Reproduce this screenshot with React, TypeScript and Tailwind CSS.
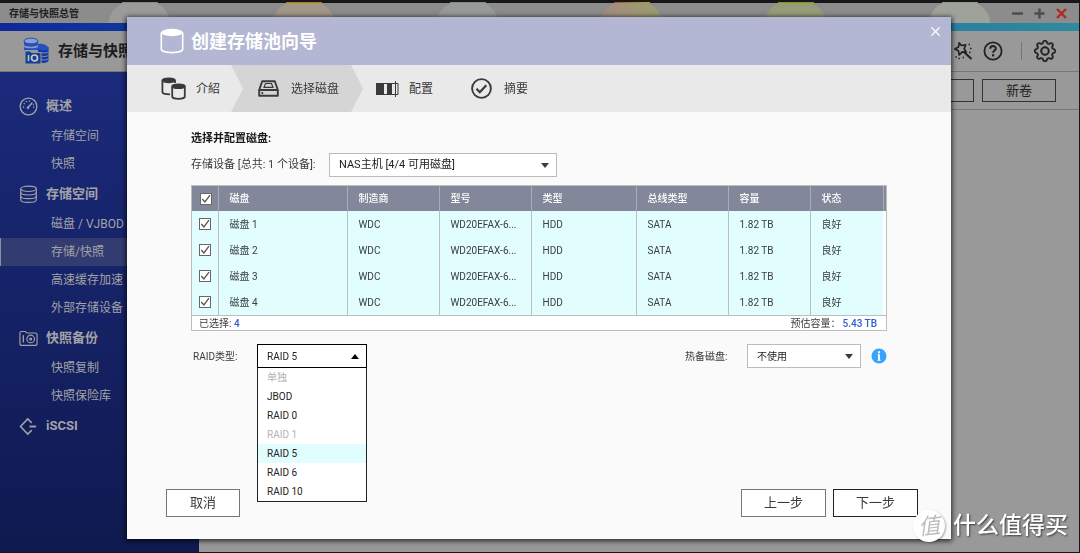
import { useState, type ReactNode } from "react";
import clsx from "clsx";
import { X } from "lucide-react";
import { BsGear } from "react-icons/bs";

const menu = [
  { title: "概述", icon: <GaugeIcon />, items: ["存储空间", "快照"] },
  {
    title: "存储空间",
    icon: <DisksIcon />,
    items: ["磁盘 / VJBOD", "存储/快照", "高速缓存加速", "外部存储设备"],
  },
  { title: "快照备份", icon: <CameraIcon />, items: ["快照复制", "快照保险库"] },
  { title: "iSCSI", icon: <IscsiIcon />, items: [] },
];

const columns = [
  { name: "磁盘", width: "w-[129px]" },
  { name: "制造商", width: "w-[92px]" },
  { name: "型号", width: "w-[92px]" },
  { name: "类型", width: "w-[105px]" },
  { name: "总线类型", width: "w-[92px]" },
  { name: "容量", width: "w-[82px]" },
  { name: "状态", width: "" },
];

const disks = [1, 2, 3, 4].map((n) => ({
  id: n,
  cells: [`磁盘 ${n}`, "WDC", "WD20EFAX-6...", "HDD", "SATA", "1.82 TB", "良好"],
}));

const raidTypes = [
  { name: "单独", disabled: true },
  { name: "JBOD" },
  { name: "RAID 0" },
  { name: "RAID 1", disabled: true },
  { name: "RAID 5" },
  { name: "RAID 6" },
  { name: "RAID 10" },
];

const dock = [
  { body: "bg-[#9b9b9a]", cap: "bg-[#868b88]" },
  { body: "bg-[#a39786]", cap: "bg-[#b27c14]" },
  { body: "bg-[#979a99]", cap: "bg-[#7f8a8a]" },
  {
    body: "bg-gradient-to-r from-[#a38c80] to-[#9b9c6c]",
    cap: "bg-gradient-to-r from-[#a8403c] to-[#a8a81c]",
  },
  { body: "bg-[#989b79]", cap: "bg-[#7c9c14]" },
  { body: "bg-[#9fa29b]", cap: "bg-[#869a90]" },
];

function GaugeIcon() {
  return (
    <svg viewBox="0 0 20 20" className="h-[19px] w-[19px]" fill="none" stroke="currentColor">
      <circle cx="10" cy="10" r="8.8" strokeWidth="1.4" />
      <path d="M9.5 11 13.5 6.5" strokeWidth="1.6" strokeLinecap="round" />
      <circle cx="9.4" cy="11.2" r="1.3" fill="currentColor" stroke="none" />
      <path
        d="M4 10.5h1.4M5 6.6l1 .8M7.4 4.2l.6 1.2M11 3.8l-.2 1.3M14.8 10.5H16M15.6 7.6l-1 .5"
        strokeWidth="1.4"
      />
    </svg>
  );
}

function DisksIcon() {
  return (
    <svg viewBox="0 0 20 20" className="h-[19px] w-[19px]" fill="none" stroke="currentColor" strokeWidth="1.2">
      <ellipse cx="10" cy="4" rx="8.2" ry="2.8" />
      <path d="M1.8 4v11.4c0 1.6 3.6 2.9 8.2 2.9s8.2-1.3 8.2-2.9V4" />
      <path d="M1.8 7.6c0 1.6 3.6 2.9 8.2 2.9s8.2-1.3 8.2-2.9" />
      <path d="M1.8 11.5c0 1.6 3.6 2.9 8.2 2.9s8.2-1.3 8.2-2.9" />
    </svg>
  );
}

function CameraIcon() {
  return (
    <svg viewBox="0 0 20 20" className="h-[19px] w-[19px]" fill="none" stroke="currentColor" strokeWidth="1.2">
      <path d="M1 4.2c0-1 .5-1.6 1.5-1.6h4.2l1.4 1.6h9.2c1 0 1.7.6 1.7 1.6v9.8c0 1-.7 1.7-1.7 1.7H2.7c-1 0-1.7-.7-1.7-1.7z" />
      <path d="M4.6 6.5v7.6" strokeWidth="1.4" />
      <circle cx="12.3" cy="10.5" r="4" />
      <circle cx="12.3" cy="10.5" r="1.6" fill="currentColor" stroke="none" />
    </svg>
  );
}

function IscsiIcon() {
  return (
    <svg viewBox="0 0 20 20" className="h-[19px] w-[19px]" fill="none" stroke="currentColor" strokeWidth="1.6">
      <path d="M13.4 6.2 9.2 2 1.6 10l7.6 8 4.2-4.2" />
      <path d="M11 10h7" strokeWidth="2" />
    </svg>
  );
}

function AppIcon() {
  return (
    <svg viewBox="0 0 26 28" className="h-7 w-[26px]">
      <path d="M1 4v9h14V4z" fill="#2450c0" />
      <ellipse cx="8" cy="4" rx="7" ry="2.8" fill="#8aa0c4" stroke="#2450c0" />
      <path d="M1 8c1.5 2.2 12 2.2 14 0v2c-1.500 1.800-12.500 1.800-14 0z" fill="#8c9cbc" />
      <path d="M15 10v14c2 2.6 8.5 2.6 10.5 0V10z" fill="#16389c" />
      <path d="M15 7c4-1 8 0 10.5 3.5v2c-3 1.500-7.500 1.500-10.500-.500z" fill="#2450c0" />
      <path d="M18 15.500c3 1 6 .5 7.5-.7M18 19c3 1 6 .5 7.5-.7M18 22.500c3 1 6 .5 7.5-.7" stroke="#8090b4" fill="none" />
      <path d="M2 14h5l1.5 1.5H18V27H2z" fill="#173f92" stroke="#9a9a9a" />
      <path d="M5.5 18v6" stroke="#c4c8cc" strokeWidth="1.5" />
      <circle cx="11.5" cy="21" r="3" fill="none" stroke="#c4c8cc" strokeWidth="1.7" />
    </svg>
  );
}

function WandIcon() {
  return (
    <svg viewBox="0 0 20 20" className="h-5 w-5" fill="none" stroke="currentColor">
      <path
        d="M6.200 1.800 8.400 4.500l4.300-.700-1.500 3.900 2 3.400-4-.300-3 3.200-.800-4.200-3.600-1.900 3.700-2z"
        strokeWidth="1.7"
        strokeLinejoin="round"
      />
      <path d="m11 11 7.500 7" strokeWidth="2.1" />
      <path d="M15.500 3.500H17M17 7.500h1.500M16 11.500h1.500M2.500 16H4M5.500 17.500H7M9.500 16.500H11" strokeWidth="1.4" />
    </svg>
  );
}

function HelpIcon() {
  return (
    <svg viewBox="0 0 20 20" className="h-5 w-5" fill="none" stroke="currentColor">
      <circle cx="10" cy="10" r="8.6" strokeWidth="1.8" />
      <path d="M7.300 7.800c0-3.600 5.500-3.500 5.500-.300 0 2-2.700 2.100-2.700 4.300" strokeWidth="2" />
      <path d="M10.100 13.200v2.200" strokeWidth="2.200" />
    </svg>
  );
}

function PoolIcon() {
  return (
    <svg viewBox="0 0 24 26" className="h-[26px] w-6">
      <path d="M1.3 4.5v16.5c0 2 4.5 3.6 10.7 3.6s10.7-1.6 10.7-3.6V4.5" fill="none" stroke="white" strokeWidth="1.6" />
      <ellipse cx="12" cy="4.5" rx="11" ry="3.7" fill="white" />
    </svg>
  );
}

function PoolsIcon() {
  return (
    <svg viewBox="0 0 25 23" className="h-[23px] w-[25px]" fill="none" stroke="currentColor" strokeWidth="1.8">
      <path d="M1.4 3.5v11.5c0 1.300 2.500 2.300 7.600 2.300M14 3.5V6" />
      <ellipse cx="7.7" cy="3.3" rx="6.3" ry="2" fill="currentColor" />
      <path d="M11.2 9.5v10c0 1.2 2.6 2.3 6.3 2.3s6.3-1.1 6.3-2.3v-10" />
      <ellipse cx="17.5" cy="9.2" rx="6.3" ry="1.9" fill="currentColor" />
    </svg>
  );
}

function DriveIcon() {
  return (
    <svg viewBox="0 0 21 17" className="h-[17px] w-[21px]" fill="none" stroke="currentColor" strokeWidth="1.9">
      <path d="M1.2 10 4.2 1.2h12.6L19.8 10z" strokeLinejoin="round" />
      <path d="M1.2 10v5.8h18.6V10" strokeLinejoin="round" />
      <path d="M7.5 3.5h6l1.5 3.8H6z" strokeWidth="1.2" />
      <path d="M3.5 13h1.7" />
    </svg>
  );
}

function ConfigIcon() {
  return (
    <svg viewBox="0 0 23 16" className="h-4 w-[23px]" fill="currentColor">
      <path d="M0 2h8v12H0zM11 2h5v12h-5z" />
      <path d="M.5 2.5h21.5v11H.5zM19.5 0v16" fill="none" stroke="currentColor" />
    </svg>
  );
}

function SummaryIcon() {
  return (
    <svg viewBox="0 0 21 21" className="h-[21px] w-[21px]" fill="none" stroke="currentColor">
      <circle cx="10.5" cy="10.5" r="9.4" strokeWidth="1.9" />
      <path d="m5.5 10.8 3.3 3.4 6.5-6.9" strokeWidth="2.3" />
    </svg>
  );
}

function Arrow({ up = false }: { up?: boolean }) {
  return (
    <svg
      viewBox="0 0 8 5"
      className={clsx("pointer-events-none absolute right-2 top-[10px] h-[5px] w-2", up && "rotate-180")}
    >
      <path d="M0 0h8L4 5z" fill={up ? "#000" : "#3c3c3c"} />
    </svg>
  );
}

function Tick({ label }: { label: string }) {
  return (
    <span className="relative block h-3 w-3">
      <input
        type="checkbox"
        defaultChecked
        aria-label={label}
        className="peer block h-3 w-3 appearance-none border border-[#666] bg-white"
      />
      <svg
        viewBox="0 0 12 12"
        className="pointer-events-none absolute inset-0 hidden h-3 w-3 peer-checked:block"
        fill="none"
        stroke="#555"
        strokeWidth="1.3"
      >
        <path d="m2.3 6 2.6 3L10 2.2" />
      </svg>
    </span>
  );
}

function Button({ children, className }: { children: ReactNode; className?: string }) {
  return (
    <button type="button" className={clsx("h-7 border bg-white text-[13px] text-[#3a3a3a]", className)}>
      {children}
    </button>
  );
}

function WindowButton({ label, path, className }: { label: string; path: string; className?: string }) {
  return (
    <button type="button" aria-label={label} className={className}>
      <svg viewBox="0 0 11 11" className="h-[11px] w-[11px]" fill="none" stroke="currentColor" strokeWidth="2.4">
        <path d={path} />
      </svg>
    </button>
  );
}

function Sidebar() {
  return (
    <nav className="w-[199px] shrink-0 bg-gradient-to-b from-[#1b2a7b] to-[#0f1a50] pt-[18px] text-[#a3a3a6]">
      {menu.map((group) => (
        <div key={group.title}>
          <a href="#" className="flex h-8 items-center gap-2 pl-[19px] text-[13px] font-bold">
            {group.icon}
            {group.title}
          </a>
          {group.items.map((item) => (
            <a
              key={item}
              href="#"
              className={clsx(
                "flex h-7 items-center border-l pl-[50px] text-[12px]",
                item === "存储/快照" ? "border-[#8a8fa8] bg-[#323c70]" : "border-transparent"
              )}
            >
              {item}
            </a>
          ))}
        </div>
      ))}
    </nav>
  );
}

function StorageManager() {
  return (
    <div className="flex min-h-screen flex-col border-b border-r border-t-[3px] border-[#161716] bg-[#999]">
      <div className="relative flex h-5 items-center justify-between bg-[#8c8c8c] pl-[9px] pr-3">
        <div className="absolute -top-px left-[109px] flex gap-[103px]">
          {dock.map((app, i) => (
            <div key={i} className={clsx("flex h-[21px] w-[61px] justify-center rounded-t-[28px]", app.body)}>
              <div className={clsx("h-px w-9", app.cap)} />
            </div>
          ))}
        </div>
        <h1 className="relative text-[10px] font-bold text-[#222]">存储与快照总管</h1>
        <div className="relative flex items-center gap-[11px] text-[#4a4b54]">
          <WindowButton label="最小化" path="M0 5.500h11" />
          <WindowButton label="最大化" path="M.5 5.500h10M5.500 .5v10" />
          <WindowButton label="关闭" path="m1 1 9 9M10 1l-9 9" className="text-[#b02a22]" />
        </div>
      </div>
      <div className="h-2 bg-gradient-to-r from-[#10279a] via-[#1e5ea0] to-[#2f8a9f]" />
      <header className="flex h-[41px] items-center justify-between border-b border-[#777] pl-[23px] pr-[23px]">
        <div className="flex items-center gap-[9px]">
          <AppIcon />
          <span className="text-[15px] font-bold text-[#1c1c1c]">存储与快照总管</span>
        </div>
        <div className="flex items-center text-[#222]">
          <button type="button" aria-label="工具">
            <WandIcon />
          </button>
          <button type="button" aria-label="帮助" className="ml-2.5">
            <HelpIcon />
          </button>
          <div className="ml-[18px] h-[18px] w-px bg-[#77756c]" />
          <button type="button" aria-label="设置" className="ml-3">
            <BsGear size={22} strokeWidth={0.4} />
          </button>
        </div>
      </header>
      <div className="flex flex-1">
        <Sidebar />
        <main className="flex-1">
          <div className="flex h-[38px] items-center justify-end gap-2 border-b border-[#777] pr-[23px] text-[13px] text-[#222]">
            <button type="button" className="h-[23px] w-[74px] border border-[#333]">
              新池
            </button>
            <button type="button" className="h-[23px] w-[74px] border border-[#333]">
              新卷
            </button>
          </div>
        </main>
      </div>
    </div>
  );
}

function Steps() {
  return (
    <ol className="flex h-[47px] items-stretch bg-[#e9e9e9] text-[12px] text-[#3a3a3a]">
      <li className="flex w-[104px] items-center gap-2.5 pl-[34px]">
        <PoolsIcon />
        介紹
      </li>
      <li className="flex w-[132px] items-center gap-3 bg-[#d5d5d5] pl-[27px] [clip-path:polygon(0_0,calc(100%-12px)_0,100%_50%,calc(100%-12px)_100%,0_100%,12px_50%)]">
        <DriveIcon />
        选择磁盘
      </li>
      <li className="flex items-center gap-2.5 pl-[13px]">
        <ConfigIcon />
        配置
      </li>
      <li className="flex items-center gap-3 pl-[38px]">
        <SummaryIcon />
        摘要
      </li>
    </ol>
  );
}

function DiskTable() {
  return (
    <div className="mt-2 border border-[#bdbdbd] bg-white">
      <table className="w-full table-fixed text-left text-[10px]">
        <thead>
          <tr className="h-[25px] bg-[#82879a] text-white">
            <th className="w-[26px] border-r border-[#a9acba] pl-2">
              <Tick label="全选" />
            </th>
            {columns.map((col) => (
              <th key={col.name} className={clsx("border-r border-[#a9acba] pl-[11px] font-medium", col.width)}>
                {col.name}
              </th>
            ))}
            <th className="w-[3px]" />
          </tr>
        </thead>
        <tbody>
          {disks.map((disk) => (
            <tr key={disk.id} className="h-[26px] bg-[#e2fdfd] text-[#3a4040]">
              <td className="border-r border-[#bdbdbd] pl-[7px]">
                <Tick label={`磁盘 ${disk.id}`} />
              </td>
              {disk.cells.map((cell, i) => (
                <td
                  key={i}
                  className="whitespace-nowrap border-r border-[#bdbdbd] pl-[11px] [&:nth-last-child(2)]:border-r-0"
                >
                  {cell}
                </td>
              ))}
              <td className="bg-white" />
            </tr>
          ))}
        </tbody>
      </table>
      <div className="flex h-[15px] items-center justify-between border-t border-[#bdbdbd] pl-[7px] pr-[9px] text-[10px] text-[#3a3a3a]">
        <span>
          已选择: <b className="font-medium text-[#2f5bd7]">4</b>
        </span>
        <span className="flex gap-0.5">
          预估容量：<b className="font-medium text-[#2f5bd7]">5.43 TB</b>
        </span>
      </div>
    </div>
  );
}

function RaidSelect() {
  const [open, setOpen] = useState(true);
  const [value, setValue] = useState("RAID 5");

  return (
    <div className="relative w-[110px]">
      <select
        id="raid"
        value={value}
        onChange={(e) => setValue(e.target.value)}
        onMouseDown={(e) => {
          e.preventDefault();
          setOpen(!open);
        }}
        className="block h-6 w-full appearance-none border border-black bg-white pl-[9px] text-[10px] text-[#222]"
      >
        {raidTypes.map((type) => (
          <option key={type.name} disabled={type.disabled}>
            {type.name}
          </option>
        ))}
      </select>
      <Arrow up={open} />
      {open && (
        <ul className="absolute left-0 top-full w-full border border-t-0 border-[#222] bg-white text-[10px]">
          {raidTypes.map((type) => (
            <li
              key={type.name}
              onClick={() => {
                if (type.disabled) return;
                setValue(type.name);
                setOpen(false);
              }}
              className={clsx(
                "flex h-[19px] items-center pl-[9px]",
                type.disabled ? "text-[#b4b4b4]" : "text-[#222]",
                type.name === value && "bg-[#e2fdfd]"
              )}
            >
              {type.name}
            </li>
          ))}
        </ul>
      )}
    </div>
  );
}

function Wizard() {
  return (
    <div className="fixed inset-0 flex pb-[14px] pl-[127px] pr-[129px] pt-[17px]">
      <section className="flex flex-1 flex-col bg-[#fafafa] shadow-[0_1px_5px_1px_rgba(0,0,0,0.75)]">
        <div className="flex h-12 items-center gap-[7px] bg-[#b3b7d4] pl-[33px] pr-2 text-white">
          <PoolIcon />
          <h2 className="flex-1 text-[18px] font-bold">创建存储池向导</h2>
          <button type="button" aria-label="关闭" className="self-start pt-[7px]">
            <X size={15} strokeWidth={2} />
          </button>
        </div>
        <Steps />

        <div className="flex-1 px-16 pt-[19px] text-[#3a3a3a]">
          <h3 className="text-[11px] font-bold leading-4 text-[#1a1a1a]">选择并配置磁盘:</h3>
          <div className="mt-1.5 flex items-center">
            <label htmlFor="device" className="w-[138px] text-[11px]">
              存储设备 [总共: 1 个设备]:
            </label>
            <div className="relative w-[228px]">
              <select
                id="device"
                className="block h-6 w-full appearance-none border border-[#bbb] bg-white pl-[9px] text-[11px] text-[#222]"
              >
                <option>NAS主机 [4/4 可用磁盘]</option>
              </select>
              <Arrow />
            </div>
          </div>

          <DiskTable />

          <div className="mt-[13px] flex items-center text-[10px]">
            <label htmlFor="raid" className="w-[66px] pl-0.5">
              RAID类型:
            </label>
            <RaidSelect />
            <label htmlFor="spare" className="ml-auto w-[62px]">
              热备磁盘:
            </label>
            <div className="relative w-[114px]">
              <select
                id="spare"
                className="block h-6 w-full appearance-none border border-[#bbb] bg-white pl-[9px] text-[10px] text-[#222]"
              >
                <option>不使用</option>
              </select>
              <Arrow />
            </div>
            <svg viewBox="0 0 16 16" className="ml-2.5 h-4 w-4">
              <circle cx="8" cy="8" r="7.5" fill="#38a3fb" />
              <path d="M7 3.200h2v2H7zM6.500 6.300H9v5.400h.700v1H6.500v-1H7V7.300h-.500z" fill="white" />
            </svg>
          </div>
        </div>

        <div className="flex gap-[7px] pb-[22px] pl-[39px] pr-[33px]">
          <Button className="mr-auto w-[74px] border-[#777]">取消</Button>
          <Button className="w-[85px] border-[#777]">上一步</Button>
          <Button className="w-[85px] border-[#222]">下一步</Button>
        </div>
      </section>
    </div>
  );
}

export default function App() {
  return (
    <div className="[font-family:Roboto,'Noto_Sans_CJK_SC',sans-serif]">
      <StorageManager />
      <Wizard />
      <div className="pointer-events-none fixed bottom-[11px] right-3 flex items-center gap-2 text-white">
        <span className="flex h-8 w-8 -rotate-6 items-center justify-center rounded-full bg-white text-[22px] italic text-[#bdbdbd] shadow-[1px_1px_2px_rgba(0,0,0,0.3)]">
          值
        </span>
        <span className="text-[23px] font-medium leading-8 [text-shadow:1px_1px_2px_rgba(0,0,0,0.6)]">什么值得买</span>
      </div>
    </div>
  );
}
